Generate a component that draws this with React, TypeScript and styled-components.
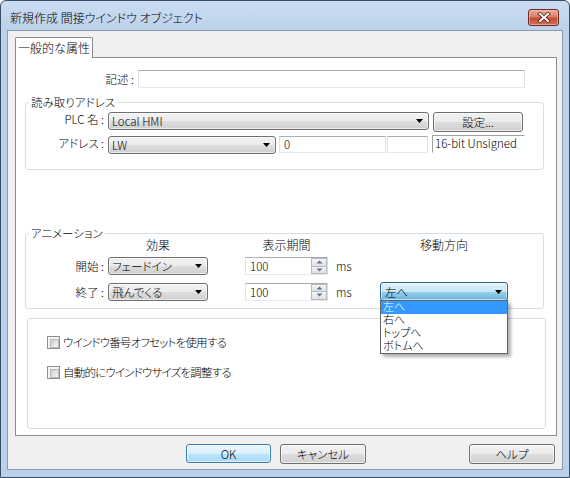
import React from 'react';
import styled, { createGlobalStyle } from 'styled-components';

const GlobalStyle = createGlobalStyle`
  html, body { margin: 0; padding: 0; width: 570px; height: 478px; overflow: hidden; background: #ffffff; }
  * { box-sizing: border-box; }
  body {
    font-family: "Noto Sans CJK JP", "Noto Sans", "Liberation Sans", sans-serif;
    font-size: 11.5px;
    font-weight: 300;
    font-feature-settings: "palt";
    color: #000;
  }
`;

const Window = styled.div`
  width: 570px;
  height: 478px;
  display: flex;
  flex-direction: column;
  border: 1px solid #3a4f66;
  border-radius: 6px 6px 0 0;
  background: linear-gradient(#cadcf1 0px, #bcd2eb 29px, #bad1eb 100%);
  padding: 0 6px 7px 6px;
`;

const TitleBar = styled.div`
  height: 29px;
  flex: none;
  display: flex;
  align-items: center;
  padding: 4px 4px 0 3px;
`;

const Title = styled.div`
  flex: 1;
  font-size: 12px;
  line-height: 14px;
  color: #000;
  white-space: nowrap;
`;

const CloseButton = styled.div`
  width: 31px;
  height: 17px;
  border: 1px solid #6b2a1f;
  border-radius: 3px;
  background: linear-gradient(#e9a99a 0%, #d77f6a 45%, #c44a30 55%, #d0745a 100%);
  display: flex;
  align-items: center;
  justify-content: center;
  box-shadow: inset 0 0 0 1px rgba(255, 220, 210, 0.45);
`;

const Client = styled.div`
  flex: 1;
  display: flex;
  flex-direction: column;
  background: #f0f0f0;
  border: 1px solid #8b9cb1;
  padding-bottom: 5px;
`;

const TabStrip = styled.div`
  display: flex;
  padding: 6px 0 0 7px;
  position: relative;
  z-index: 1;
`;

const Tab = styled.div`
  width: 78px;
  height: 21px;
  margin-bottom: -1px;
  background: #ffffff;
  border: 1px solid #898c95;
  border-bottom: none;
  border-radius: 2px 2px 0 0;
  display: flex;
  align-items: center;
  justify-content: center;
  line-height: 14px;
  font-size: 12px;
`;

const Panel = styled.div`
  flex: 1;
  margin: 0 5px 0 7px;
  background: #ffffff;
  border: 1px solid #898c95;
  display: flex;
  flex-direction: column;
`;

const DescRow = styled.div`
  display: flex;
  align-items: center;
  height: 18px;
  margin-top: 12px;
`;

const Label = styled.div<{ $w: number }>`
  width: ${(p) => p.$w}px;
  flex: none;
  text-align: right;
  padding-right: 4px;
  line-height: 14px;
  white-space: nowrap;
`;

const TextBox = styled.div<{ $w: number; $h?: number }>`
  width: ${(p) => p.$w}px;
  height: ${(p) => p.$h ?? 18}px;
  flex: none;
  background: #ffffff;
  border: 1px solid;
  border-color: #abadb3 #dbdfe6 #e3e9ef #e2e3ea;
  padding: 0 4px;
  line-height: ${(p) => (p.$h ?? 18) - 2}px;
  white-space: nowrap;
`;

const Group = styled.fieldset<{ $top: number; $pb: number }>`
  margin: ${(p) => p.$top}px 12px 0 9px;
  padding: 0 0 ${(p) => p.$pb}px 0;
  border: 1px solid #d5dfe5;
  border-radius: 3px;
  min-inline-size: 0;
`;

const Legend = styled.legend`
  margin-left: 3px;
  padding: 0 2px;
  line-height: 12px;
`;

const GroupRows = styled.div`
  display: flex;
  flex-direction: column;
  gap: 5px;
  padding-top: 4px;
`;

const Row = styled.div`
  display: flex;
  align-items: flex-start;
  height: 19px;
`;

const Combo = styled.div<{ $w: number; $focus?: boolean }>`
  width: ${(p) => p.$w}px;
  height: ${(p) => (p.$focus ? 19 : 18)}px;
  flex: none;
  position: relative;
  display: flex;
  align-items: center;
  padding-left: ${(p) => (p.$focus ? 4 : 3)}px;
  border: 1px solid ${(p) => (p.$focus ? '#2c628b' : '#707070')};
  border-radius: 3px;
  background: ${(p) =>
    p.$focus
      ? 'linear-gradient(#e5f4fc 0%, #c4e5f6 50%, #98d1ef 51%, #68b3db 100%)'
      : 'linear-gradient(#f2f2f2 0%, #ebebeb 50%, #dddddd 51%, #cfcfcf 100%)'};
  box-shadow: inset 0 0 0 1px rgba(255, 255, 255, 0.55);
  line-height: 14px;
  white-space: nowrap;
`;

const ComboText = styled.span`
  flex: 1;
`;

const ArrowWrap = styled.span`
  width: 7px;
  height: 4px;
  margin-right: 5px;
  display: flex;
`;

const Button = styled.div<{ $w: number; $primary?: boolean }>`
  width: ${(p) => p.$w}px;
  height: ${(p) => (p.$primary ? 19 : 20)}px;
  flex: none;
  display: flex;
  align-items: center;
  justify-content: center;
  border: 1px solid ${(p) => (p.$primary ? '#3c7fb1' : '#707070')};
  border-radius: 3px;
  background: ${(p) =>
    p.$primary
      ? 'linear-gradient(#eaf6fd 0%, #d9f0fc 50%, #bee6fd 51%, #a7d9f5 100%)'
      : 'linear-gradient(#f2f2f2 0%, #ebebeb 50%, #dddddd 51%, #cfcfcf 100%)'};
  box-shadow: inset 0 0 0 1px rgba(255, 255, 255, 0.6);
  line-height: 14px;
  white-space: nowrap;
`;

const StaticBox = styled.div`
  width: 93px;
  height: 18px;
  flex: none;
  margin-top: -1px;
  border: 1px solid;
  border-color: #a0a0a0 #ffffff #ffffff #a0a0a0;
  padding-left: 2px;
  line-height: 15px;
  white-space: nowrap;
`;

const AnimGrid = styled.div<{ $h: number; $top: number }>`
  display: grid;
  grid-template-columns: 82px 100px 37px 83px 52px 128px;
  height: ${(p) => p.$h}px;
  margin-top: ${(p) => p.$top}px;
  align-items: center;
`;

const Head = styled.div<{ $col: number }>`
  grid-column: ${(p) => p.$col};
  text-align: center;
  line-height: 12px;
  font-size: 12px;
  white-space: nowrap;
`;

const Ms = styled.div`
  padding-left: 8px;
  line-height: 14px;
`;

const SpinBox = styled.div`
  width: 83px;
  height: 18px;
  display: flex;
  align-items: stretch;
  background: #fff;
  border: 1px solid;
  border-color: #abadb3 #dbdfe6 #e3e9ef #e2e3ea;
`;

const SpinText = styled.div`
  flex: 1;
  padding-left: 4px;
  line-height: 16px;
`;

const SpinCol = styled.div`
  width: 16px;
  display: flex;
  flex-direction: column;
`;

const SpinHalf = styled.div<{ $down?: boolean }>`
  flex: 1;
  display: flex;
  align-items: center;
  justify-content: center;
  border: 1px solid #b4b8bf;
  border-top-width: ${(p) => (p.$down ? 0 : 1)}px;
  background: linear-gradient(#f6f6f6, #dfe1e5);
`;

const DirWrap = styled.div`
  position: relative;
  height: 19px;
  align-self: start;
`;

const DropList = styled.div`
  position: absolute;
  left: 0;
  top: 18px;
  width: 128px;
  background: #ffffff;
  border: 1px solid #646464;
  box-shadow: 3px 3px 3px rgba(0, 0, 0, 0.3);
  z-index: 5;
`;

const DropItem = styled.div<{ $sel?: boolean }>`
  height: 13px;
  line-height: 13px;
  font-family: "Liberation Sans", "Noto Sans CJK JP", sans-serif;
  font-size: 11px;
  padding-left: 2px;
  background: ${(p) => (p.$sel ? '#3399ff' : 'transparent')};
  color: ${(p) => (p.$sel ? '#ffffff' : '#000000')};
  white-space: nowrap;
`;

const CheckGroup = styled.div`
  flex: 1;
  margin: 9px 10px 6px 11px;
  border: 1px solid #d5dfe5;
  border-radius: 3px;
  padding: 16px 0 0 19px;
  display: flex;
  flex-direction: column;
  gap: 16px;
`;

const CheckRow = styled.div`
  display: flex;
  align-items: center;
  height: 14px;
  gap: 3px;
  line-height: 14px;
  letter-spacing: -0.8px;
  white-space: nowrap;
`;

const CheckBox = styled.div`
  width: 13px;
  height: 13px;
  flex: none;
  border: 1px solid #8e8f8f;
  background: #f4f4f4;
  padding: 2px;
  &::after {
    content: '';
    display: block;
    width: 100%;
    height: 100%;
    border: 1px solid #b8b8b8;
    background: linear-gradient(135deg, #c9c9c9 0%, #e6e6e6 60%, #f4f4f4 100%);
  }
`;

const ButtonRow = styled.div`
  display: flex;
  gap: 9px;
  margin-top: 8px;
  padding: 0 7px 0 178px;
  height: 20px;
`;

const Spacer = styled.div`
  flex: 1;
`;

const Gap = styled.div<{ $w: number }>`
  width: ${(p) => p.$w}px;
  flex: none;
`;

const Arrow = () => (
  <ArrowWrap>
    <svg width="7" height="4" viewBox="0 0 7 4">
      <polygon points="0,0 7,0 3.5,4" fill="#000" />
    </svg>
  </ArrowWrap>
);

const SpinArrow = ({ down }: { down?: boolean }) => (
  <svg width="7" height="4" viewBox="0 0 7 4">
    <polygon points={down ? '0.5,0.5 6.5,0.5 3.5,3.5' : '0.5,3.5 6.5,3.5 3.5,0.5'} fill="#5a6f95" />
  </svg>
);

const Spin = ({ value }: { value: string }) => (
  <SpinBox>
    <SpinText>{value}</SpinText>
    <SpinCol>
      <SpinHalf>
        <SpinArrow />
      </SpinHalf>
      <SpinHalf $down>
        <SpinArrow down />
      </SpinHalf>
    </SpinCol>
  </SpinBox>
);

const Select = ({ w, text, focus }: { w: number; text: string; focus?: boolean }) => (
  <Combo $w={w} $focus={focus}>
    <ComboText>{text}</ComboText>
    <Arrow />
  </Combo>
);

export default function App() {
  return (
    <>
      <GlobalStyle />
      <Window>
        <TitleBar>
          <Title>新規作成 間接ウインドウ オブジェクト</Title>
          <CloseButton>
            <svg width="14" height="11" viewBox="0 0 14 11">
              <path d="M3 2 L11 9 M11 2 L3 9" stroke="#5b2016" strokeWidth="3.6" strokeLinecap="square" />
              <path d="M3 2 L11 9 M11 2 L3 9" stroke="#ffffff" strokeWidth="2" strokeLinecap="square" />
            </svg>
          </CloseButton>
        </TitleBar>
        <Client>
          <TabStrip>
            <Tab>一般的な属性</Tab>
          </TabStrip>
          <Panel>
            <DescRow>
              <Label $w={122}>記述 :</Label>
              <TextBox $w={387} />
            </DescRow>

            <Group $top={8} $pb={14}>
              <Legend>読み取りアドレス</Legend>
              <GroupRows>
                <Row>
                  <Label $w={82}>PLC 名 :</Label>
                  <Select w={321} text="Local HMI" />
                  <Gap $w={4} />
                  <Button $w={90}>設定...</Button>
                </Row>
                <Row>
                  <Label $w={82}>アドレス :</Label>
                  <Select w={168} text="LW" />
                  <Gap $w={3} />
                  <TextBox $w={107} $h={17}>0</TextBox>
                  <Gap $w={1} />
                  <TextBox $w={41} $h={17} />
                  <Gap $w={4} />
                  <StaticBox>16-bit Unsigned</StaticBox>
                </Row>
              </GroupRows>
            </Group>

            <Group $top={57} $pb={8}>
              <Legend>アニメーション</Legend>
              <AnimGrid $h={12} $top={0}>
                <Head $col={2}>効果</Head>
                <Head $col={4}>表示期間</Head>
                <Head $col={6}>移動方向</Head>
              </AnimGrid>
              <AnimGrid $h={18} $top={6}>
                <Label $w={82}>開始 :</Label>
                <Select w={100} text="フェードイン" />
                <div />
                <Spin value="100" />
                <Ms>ms</Ms>
                <div />
              </AnimGrid>
              <AnimGrid $h={18} $top={7}>
                <Label $w={82}>終了 :</Label>
                <Select w={100} text="飛んでくる" />
                <div />
                <Spin value="100" />
                <Ms>ms</Ms>
                <DirWrap>
                  <Select w={128} text="左へ" focus />
                  <DropList>
                    <DropItem $sel>左へ</DropItem>
                    <DropItem>右へ</DropItem>
                    <DropItem>トップへ</DropItem>
                    <DropItem>ボトムへ</DropItem>
                  </DropList>
                </DirWrap>
              </AnimGrid>
            </Group>

            <CheckGroup>
              <CheckRow>
                <CheckBox />
                ウインドウ番号オフセットを使用する
              </CheckRow>
              <CheckRow>
                <CheckBox />
                自動的にウインドウサイズを調整する
              </CheckRow>
            </CheckGroup>
          </Panel>
          <ButtonRow>
            <Button $w={85} $primary>OK</Button>
            <Button $w={86}>キャンセル</Button>
            <Spacer />
            <Button $w={86}>ヘルプ</Button>
          </ButtonRow>
        </Client>
      </Window>
    </>
  );
}
